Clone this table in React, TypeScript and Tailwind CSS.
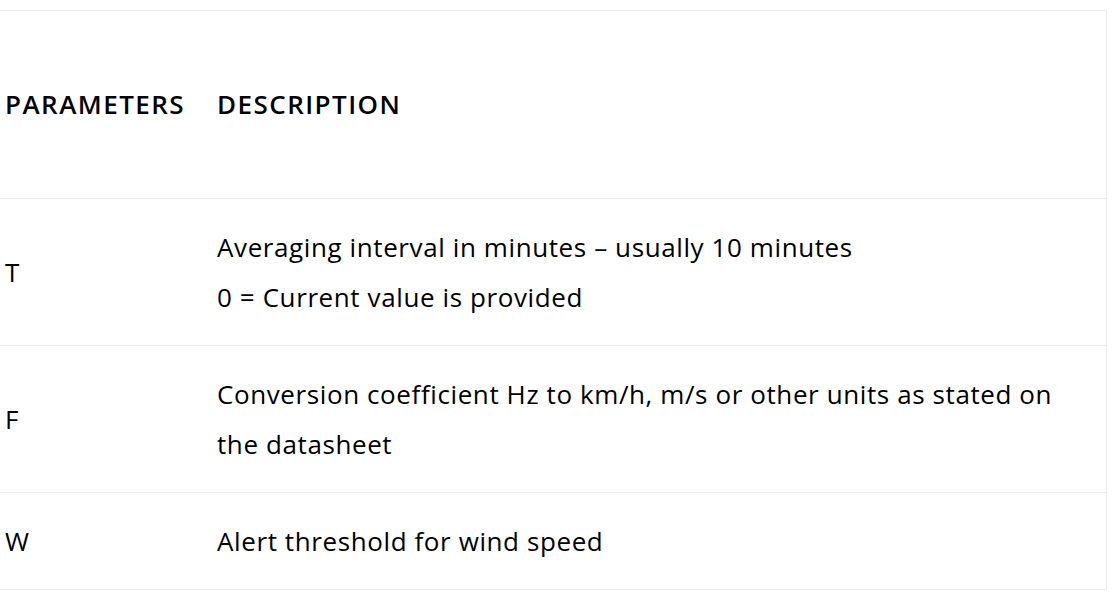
import React from "react";

const rows: { p: string; d: string[] }[] = [
  { p: "T", d: ["Averaging interval in minutes – usually 10 minutes", "0 = Current value is provided"] },
  { p: "F", d: ["Conversion coefficient Hz to km/h, m/s or other units as stated on", "the datasheet"] },
  { p: "W", d: ["Alert threshold for wind speed"] },
];

export default function App() {
  return (
    <div className="min-h-[595px] bg-white pt-[10px] text-black" style={{ fontFamily: "'Open Sans', 'Noto Sans', sans-serif" }}>
      <div className="w-[1107px] border-t border-r border-[#ebebeb]">
        <div className="flex h-[188px] items-center border-b border-[#ebebeb] text-[26px] font-semibold tracking-[1.45px]">
          <div className="w-[212px] pl-[5px]">PARAMETERS</div>
          <div className="flex-1 pl-[5px]">DESCRIPTION</div>
        </div>
        {rows.map((r) => (
          <div key={r.p} className="flex items-center border-b border-[#ebebeb] py-[23px] text-[26px] leading-[50px] tracking-[0.6px]">
            <div className="w-[212px] pl-[5px]">{r.p}</div>
            <div className="flex-1 pl-[5px]">
              {r.d.map((l) => (
                <div key={l}>{l}</div>
              ))}
            </div>
          </div>
        ))}
      </div>
    </div>
  );
}
